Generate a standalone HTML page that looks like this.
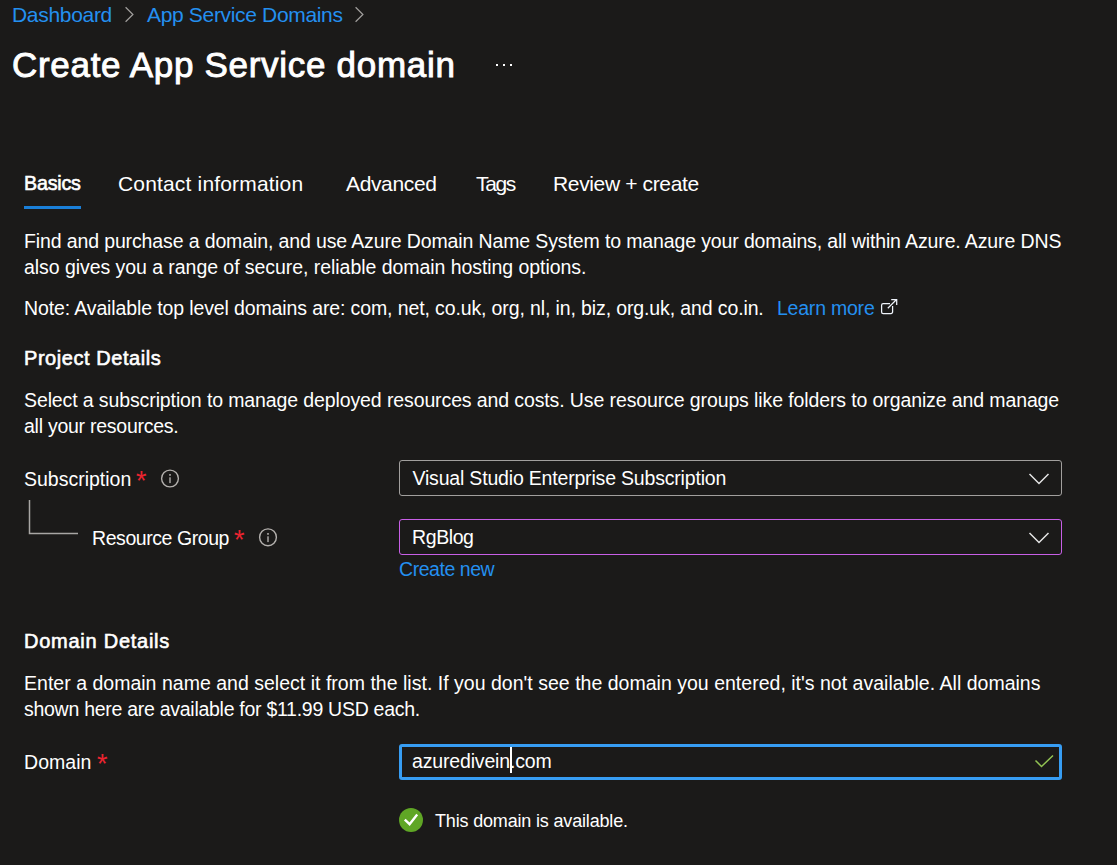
<!DOCTYPE html>
<html><head><meta charset="utf-8">
<style>
html,body{margin:0;padding:0;}
body{width:1117px;height:865px;background:#1b1a19;overflow:hidden;position:relative;font-family:"Liberation Sans",sans-serif;color:#fff;}
.t{position:absolute;white-space:nowrap;line-height:1;}
.s21{font-size:21px;}
.s19{font-size:19.5px;}
.b{font-weight:400;-webkit-text-stroke:0.6px #fff;}
.lk{color:#2490f0;}
.req{color:#ea2430;}
svg{position:absolute;overflow:visible;}
.box{position:absolute;box-sizing:border-box;border-radius:3px;}
</style></head><body>

<!-- breadcrumb -->
<div class="t s21 lk" style="left:12px;top:4px;letter-spacing:-0.312px;">Dashboard</div>
<svg style="left:0;top:0" width="1117" height="30"><polyline points="125.6,7.3 132.9,14.5 125.6,21.7" fill="none" stroke="#a19f9d" stroke-width="1.2"/></svg>
<div class="t s21 lk" style="left:147px;top:4px;letter-spacing:-0.333px;">App Service Domains</div>
<svg style="left:0;top:0" width="1117" height="30"><polyline points="355.6,7.3 362.9,14.5 355.6,21.7" fill="none" stroke="#a19f9d" stroke-width="1.2"/></svg>

<!-- title -->
<div class="t b" style="left:12px;top:47px;font-size:35px;letter-spacing:0.700px;-webkit-text-stroke:0.9px #fff;">Create App Service domain</div>
<div style="position:absolute;left:496px;top:64px;width:2px;height:2px;background:#fff"></div>
<div style="position:absolute;left:503px;top:64px;width:2px;height:2px;background:#fff"></div>
<div style="position:absolute;left:510px;top:64px;width:2px;height:2px;background:#fff"></div>

<!-- tabs -->
<div class="t b" style="left:24px;top:173px;font-size:20.5px;letter-spacing:-0.2px;transform:scaleX(0.959);transform-origin:0 0;">Basics</div>
<div class="t s21" style="left:118px;top:173px;letter-spacing:0.167px;">Contact information</div>
<div class="t s21" style="left:346px;top:173px;letter-spacing:-0.357px;">Advanced</div>
<div class="t s21" style="left:476px;top:173px;letter-spacing:-1.333px;">Tags</div>
<div class="t s21" style="left:553px;top:173px;letter-spacing:-0.357px;">Review + create</div>
<div style="position:absolute;left:24px;top:206px;width:57px;height:3px;background:#1a7fd8"></div>

<!-- intro -->
<div class="t s19" style="left:24px;top:232px;letter-spacing:-0.126px;">Find and purchase a domain, and use Azure Domain Name System to manage your domains, all within Azure. Azure DNS</div>
<div class="t s19" style="left:24px;top:258px;letter-spacing:-0.052px;">also gives you a range of secure, reliable domain hosting options.</div>
<div class="t s19" style="left:24px;top:299px;letter-spacing:-0.121px;">Note: Available top level domains are: com, net, co.uk, org, nl, in, biz, org.uk, and co.in.</div>
<div class="t s19 lk" style="left:777px;top:299px;letter-spacing:-0.222px;">Learn more</div>
<svg style="left:0;top:0" width="1117" height="865"><path d="M890,303.7 H883.2 a1.6,1.6 0 0 0 -1.6,1.6 V311.9 a1.6,1.6 0 0 0 1.6,1.6 H891 a1.6,1.6 0 0 0 1.6,-1.6 V306" fill="none" stroke="#eef3fa" stroke-width="1.25"/><path d="M887.8,308.2 L896.3,299.8 M891.2,299.7 H896.7 V304.9" fill="none" stroke="#eef3fa" stroke-width="1.25"/></svg>

<!-- project details -->
<div class="t b" style="left:24px;top:348px;font-size:20px;letter-spacing:0.558px;">Project Details</div>
<div class="t s19" style="left:24px;top:391px;letter-spacing:-0.112px;">Select a subscription to manage deployed resources and costs. Use resource groups like folders to organize and manage</div>
<div class="t s19" style="left:24px;top:417px;letter-spacing:-0.256px;">all your resources.</div>

<div class="t s19" style="left:24px;top:470px;">Subscription</div>
<div class="t req" style="left:136px;top:468px;font-size:27px;">*</div>
<svg style="left:0;top:0" width="1117" height="865"><circle cx="170" cy="478.5" r="8.4" fill="none" stroke="#b3b0ad" stroke-width="1.4"/><rect x="169" y="474" width="2" height="1.8" fill="#8f8d8b"/><rect x="169.1" y="477.3" width="1.8" height="5.8" fill="#8f8d8b"/></svg>

<svg style="left:0;top:0" width="1117" height="865"><polyline points="29.5,500 29.5,533.5 78,533.5" fill="none" stroke="#a8a6a4" stroke-width="1.5"/></svg>

<div class="t s19" style="left:92px;top:529px;letter-spacing:-0.431px;">Resource Group</div>
<div class="t req" style="left:234px;top:527px;font-size:27px;">*</div>
<svg style="left:0;top:0" width="1117" height="865"><circle cx="268" cy="537.3" r="8.4" fill="none" stroke="#b3b0ad" stroke-width="1.4"/><rect x="267" y="533" width="2" height="1.8" fill="#8f8d8b"/><rect x="267.1" y="536.3" width="1.8" height="5.8" fill="#8f8d8b"/></svg>

<div class="box" style="left:399px;top:460px;width:663px;height:36px;border:1.5px solid #a19f9d;"></div>
<div class="t s19" style="left:412.5px;top:469px;letter-spacing:-0.186px;">Visual Studio Enterprise Subscription</div>
<svg style="left:0;top:0" width="1117" height="865"><polyline points="1029.5,474 1039,483.5 1048.5,474" fill="none" stroke="#e6e6e6" stroke-width="1.5"/></svg>

<div class="box" style="left:399px;top:519px;width:663px;height:36px;border:1.5px solid #c85fe6;"></div>
<div class="t s19" style="left:412px;top:528px;letter-spacing:-0.400px;">RgBlog</div>
<svg style="left:0;top:0" width="1117" height="865"><polyline points="1029.5,533 1039,542.5 1048.5,533" fill="none" stroke="#e6e6e6" stroke-width="1.5"/></svg>

<div class="t s19 lk" style="left:399px;top:560px;letter-spacing:-0.45px;">Create new</div>

<!-- domain details -->
<div class="t b" style="left:24px;top:631px;font-size:20px;letter-spacing:0.746px;">Domain Details</div>
<div class="t s19" style="left:24px;top:674px;letter-spacing:0.017px;">Enter a domain name and select it from the list. If you don't see the domain you entered, it's not available. All domains</div>
<div class="t s19" style="left:24px;top:700px;letter-spacing:-0.275px;">shown here are available for $11.99 USD each.</div>

<div class="t s19" style="left:24px;top:753px;letter-spacing:0.05px;">Domain</div>
<div class="t req" style="left:97px;top:751px;font-size:27px;">*</div>

<div class="box" style="left:399px;top:744px;width:663px;height:36px;border:3px solid #379df3;"></div>
<div class="t s19" style="left:412px;top:752px;letter-spacing:-0.16px;">azuredivein.com</div>
<div style="position:absolute;left:510px;top:747px;width:2px;height:26px;background:#fff"></div>
<svg style="left:0;top:0" width="1117" height="865"><polyline points="1035.5,760.5 1041.5,766.5 1053,755.5" fill="none" stroke="#92c353" stroke-width="1.5"/></svg>

<svg style="left:0;top:0" width="1117" height="865"><circle cx="411" cy="820" r="12" fill="#5fa625"/><polyline points="404.8,819.6 409.6,824.2 417.2,814.6" fill="none" stroke="#fff" stroke-width="2.4"/></svg>
<div class="t" style="left:435px;top:812px;font-size:18px;letter-spacing:-0.17px;">This domain is available.</div>

</body></html>
